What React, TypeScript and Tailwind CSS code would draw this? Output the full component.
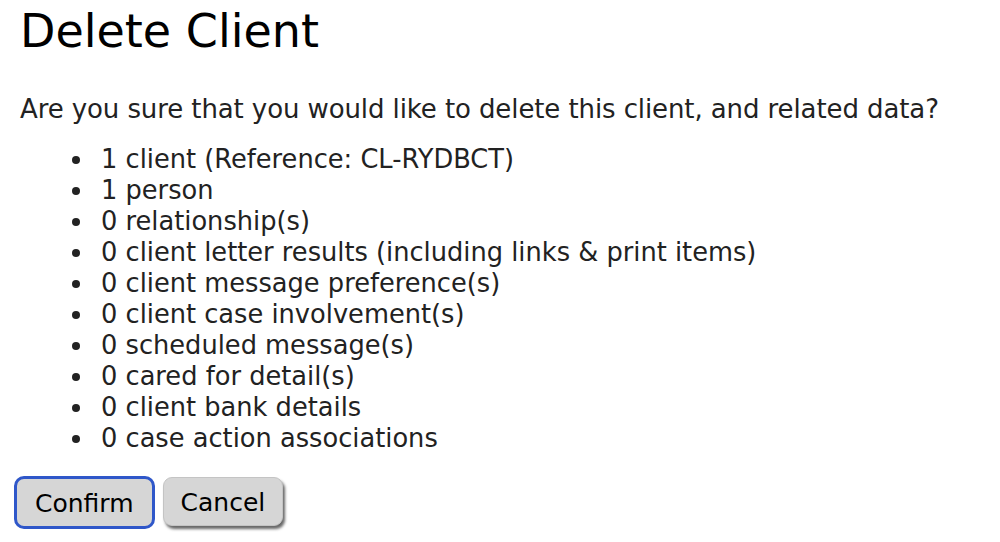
const items = [
  '1 client (Reference: CL-RYDBCT)',
  '1 person',
  '0 relationship(s)',
  '0 client letter results (including links & print items)',
  '0 client message preference(s)',
  '0 client case involvement(s)',
  '0 scheduled message(s)',
  '0 cared for detail(s)',
  '0 client bank details',
  '0 case action associations',
];

export default function App() {
  return (
    <div
      className="min-h-[542px] w-[1000px] bg-white px-5 text-[#222]"
      style={{ fontFamily: '"DejaVu Sans", Verdana, sans-serif' }}
    >
      <h1 className="pt-[4px] text-[46px] leading-[54px] text-black">Delete Client</h1>
      <p className="mt-[36px] text-[26px] leading-[31px] tracking-[-0.1px]">
        Are you sure that you would like to delete this client, and related data?
      </p>
      <ul className="mt-[19px] pl-[52px] text-[25.7px] leading-[31px]">
        {items.map((item) => (
          <li key={item} className="flex items-center">
            <span className="mr-[21px] h-[8px] w-[8px] shrink-0 rounded-full bg-[#222]" />
            <span>{item}</span>
          </li>
        ))}
      </ul>
      <div className="mt-[22px] -ml-[6px] flex items-start gap-[8px]">
        <button className="h-[53px] rounded-[10px] border-[3px] border-[#2f57c9] bg-[#d6d6d6] px-[18px] pt-[2px] text-[25px] leading-none text-black">
          Confirm
        </button>
        <button className="mt-[1px] h-[49px] rounded-[9px] border border-[#c4c4c4] bg-[#d6d6d6] px-[17px] pt-[2px] text-[25px] leading-none text-black shadow-[2px_3px_3px_rgba(0,0,0,0.6)]">
          Cancel
        </button>
      </div>
    </div>
  );
}
